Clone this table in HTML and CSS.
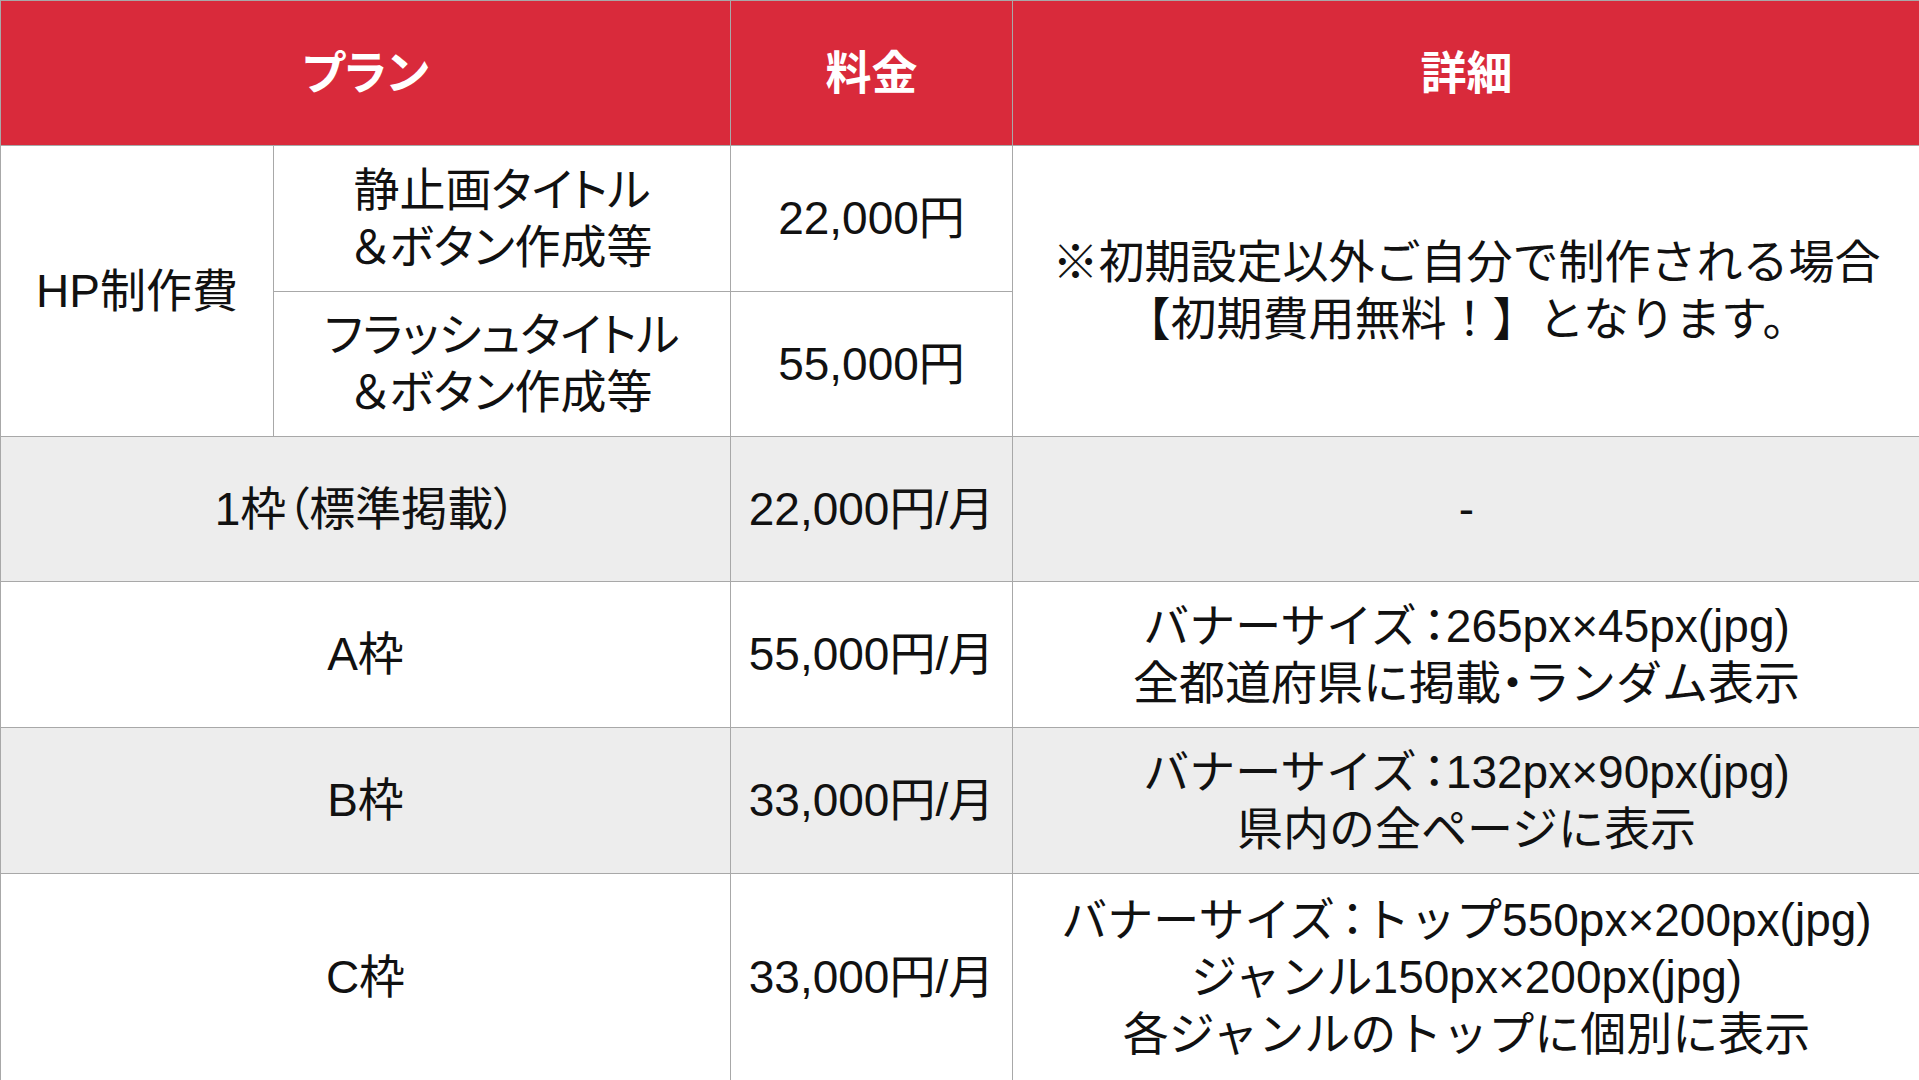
FILE: index.html
```html
<!DOCTYPE html>
<html lang="ja">
<head>
<meta charset="utf-8">
<title>料金表</title>
<link rel="stylesheet" href="styles.css">
</head>
<body>
<table class="price-table">
  <colgroup>
    <col class="c-plan-a">
    <col class="c-plan-b">
    <col class="c-price">
    <col class="c-detail">
  </colgroup>
  <thead>
    <tr class="r-head">
      <th colspan="2">プラン</th>
      <th>料金</th>
      <th>詳細</th>
    </tr>
  </thead>
  <tbody>
    <tr class="r-1">
      <td rowspan="2" class="plan">HP制作費</td>
      <td class="plan">静止画タイトル<br>＆ボタン作成等</td>
      <td>22,000円</td>
      <td rowspan="2" class="detail">※初期設定以外ご自分で制作される場合<br>【初期費用無料！】となります。</td>
    </tr>
    <tr class="r-2">
      <td class="plan">フラッシュタイトル<br>＆ボタン作成等</td>
      <td>55,000円</td>
    </tr>
    <tr class="r-3 gray">
      <td colspan="2" class="plan">1枠（標準掲載）</td>
      <td>22,000円/月</td>
      <td class="detail">-</td>
    </tr>
    <tr class="r-4">
      <td colspan="2" class="plan">A枠</td>
      <td>55,000円/月</td>
      <td class="detail">バナーサイズ<span class="colon">：</span>265px×45px(jpg)<br>全都道府県に掲載<span class="tight">・</span>ランダム表示</td>
    </tr>
    <tr class="r-5 gray">
      <td colspan="2" class="plan">B枠</td>
      <td>33,000円/月</td>
      <td class="detail">バナーサイズ<span class="colon">：</span>132px×90px(jpg)<br>県内の全ページに表示</td>
    </tr>
    <tr class="r-6">
      <td colspan="2" class="plan">C枠</td>
      <td>33,000円/月</td>
      <td class="detail">バナーサイズ<span class="colon">：</span>トップ550px×200px(jpg)<br>ジャンル150px×200px(jpg)<br>各ジャンルのトップに個別に表示</td>
    </tr>
  </tbody>
</table>
</body>
</html>
```

FILE: styles.css
```css
html, body {
  margin: 0;
  padding: 0;
  background: #ffffff;
}

body {
  width: 1919px;
  height: 1080px;
  overflow: hidden;
  font-family: "Liberation Sans", "Noto Sans CJK JP", sans-serif;
  color: #111111;
}

.price-table {
  width: 1920px;
  border-collapse: collapse;
  table-layout: fixed;
}

.c-plan-a { width: 273px; }
.c-plan-b { width: 457px; }
.c-price { width: 282px; }
.c-detail { width: 908px; }

.price-table th,
.price-table td {
  border: 1px solid #a8a8a8;
  padding: 0;
  text-align: center;
  vertical-align: middle;
  font-size: 46px;
  line-height: 57px;
  font-weight: 400;
}

.price-table th {
  background: #d92a3b;
  color: #ffffff;
  font-weight: 700;
  font-feature-settings: "palt";
}

.plan {
  font-feature-settings: "palt";
}

.detail {
  font-feature-settings: normal;
}

.colon {
  font-feature-settings: "palt";
  padding-left: 6px;
}

.tight {
  font-feature-settings: "palt";
}

.r-head { height: 145px; }
.r-1 { height: 146px; }
.r-2 { height: 145px; }
.r-3 { height: 145px; }
.r-4 { height: 146px; }
.r-5 { height: 146px; }
.r-6 { height: 207px; }

.gray td {
  background: #ededed;
}
```
